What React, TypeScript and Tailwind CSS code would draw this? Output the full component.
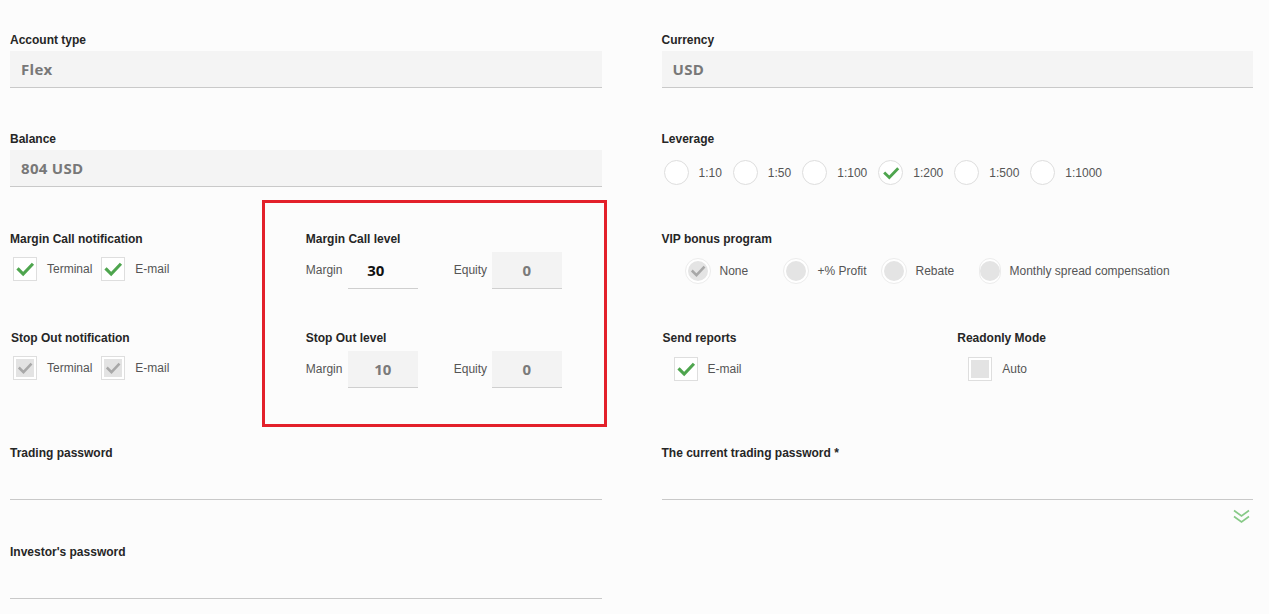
import React from "react";

const label = "block h-[18px] text-[12px] leading-[18px] font-bold text-[#262626]";
const optText = "text-[12px] text-[#555]";
const valueFont = { fontFamily: '"Open Sans", "Liberation Sans", sans-serif' };

function Check({ color, size = 24 }: { color: string; size?: number }) {
  return (
    <svg width={size} height={size} viewBox="0 0 24 24" fill="none">
      <path d="M5 12.5 L10 17.5 L19.5 7.5" stroke={color} strokeWidth="3.4" strokeLinecap="square" />
    </svg>
  );
}

function Checkbox({ state, text }: { state: "on" | "disabled-on" | "disabled"; text: string }) {
  return (
    <div className="flex items-center">
      <div className="w-6 h-6 border border-[#dedede] bg-white flex items-center justify-center">
        {state === "on" && <Check color="#4ea54e" size={22} />}
        {state === "disabled-on" && (
          <div className="w-[18px] h-[18px] bg-[#e3e3e3] flex items-center justify-center">
            <Check color="#a8a8a8" size={18} />
          </div>
        )}
        {state === "disabled" && <div className="w-[18px] h-[18px] bg-[#e3e3e3]" />}
      </div>
      <span className={`${optText} ml-[10px]`}>{text}</span>
    </div>
  );
}

function Radio({ checked, text }: { checked?: boolean; text: string }) {
  return (
    <div className="flex items-center">
      <div className="w-[25px] h-[25px] rounded-full border border-[#dedede] bg-white flex items-center justify-center">
        {checked && <Check color="#4ea54e" size={20} />}
      </div>
      <span className={`${optText} ml-[10px]`}>{text}</span>
    </div>
  );
}

function DisabledRadio({ checked, text }: { checked?: boolean; text: string }) {
  return (
    <div className="flex items-center w-[98px] shrink-0 whitespace-nowrap">
      <div className="w-[26px] h-[26px] rounded-full border border-[#ececec] bg-white flex items-center justify-center">
        <div className="w-[20px] h-[20px] rounded-full bg-[#e4e4e4] flex items-center justify-center">
          {checked && <Check color="#a8a8a8" size={18} />}
        </div>
      </div>
      <span className={`${optText} ml-[9px]`}>{text}</span>
    </div>
  );
}

function ReadField({ title, value }: { title: string; value: string }) {
  return (
    <div>
      <span className={label}>{title}</span>
      <div
        className="mt-[2px] h-[37px] bg-[#f4f4f4] border-b border-[#c9c9c9] flex items-center pl-[11px] text-[15px] font-bold text-[#787878] tracking-[0.3px]"
        style={valueFont}
      >
        {value}
      </div>
    </div>
  );
}

function PassField({ title }: { title: string }) {
  return (
    <div>
      <span className={label}>{title}</span>
      <div className="mt-px h-[37px] border-b border-[#c9c9c9]" />
    </div>
  );
}

function Level({ title, margin, equity, editable }: { title: string; margin: string; equity: string; editable?: boolean }) {
  return (
    <div>
      <span className={label}>{title}</span>
      <div className="flex items-center mt-[4px] text-[12px] text-[#555]">
        <span className="w-[42px] -mt-[2px]">Margin</span>
        <div
          className={`w-[70px] h-[37px] border-b border-[#cfcfcf] flex items-center justify-center text-[15px] font-bold ${
            editable ? "text-[#111] pr-[14px]" : "bg-[#f3f3f3] text-[#7a7a7a]"
          }`}
          style={valueFont}
        >
          {margin}
        </div>
        <span className="ml-[36px] w-[38px] -mt-[2px]">Equity</span>
        <div
          className="w-[70px] h-[37px] bg-[#f3f3f3] border-b border-[#cfcfcf] flex items-center justify-center text-[15px] font-bold text-[#7a7a7a]"
          style={valueFont}
        >
          {equity}
        </div>
      </div>
    </div>
  );
}

export default function App() {
  return (
    <div
      className="relative min-h-[614px] bg-[#fcfcfc] pl-[10px] pr-[16px] pt-[31px] pb-4"
      style={{ fontFamily: '"Liberation Sans", Arial, sans-serif' }}
    >
      {/* row 1 */}
      <div className="grid grid-cols-2 gap-x-[60px]">
        <ReadField title="Account type" value="Flex" />
        <ReadField title="Currency" value="USD" />
      </div>

      {/* row 2 */}
      <div className="grid grid-cols-2 gap-x-[60px] mt-[42px]">
        <ReadField title="Balance" value="804 USD" />
        <div>
          <span className={label}>Leverage</span>
          <div className="flex items-center gap-[11px] mt-[12px] pl-[2px]">
            <Radio text="1:10" />
            <Radio text="1:50" />
            <Radio text="1:100" />
            <Radio checked text="1:200" />
            <Radio text="1:500" />
            <Radio text="1:1000" />
          </div>
        </div>
      </div>

      {/* row 3 */}
      <div className="grid grid-cols-2 gap-x-[60px] mt-[43px]">
        <div className="grid grid-cols-2">
          <div>
            <span className={label}>Margin Call notification</span>
            <div className="flex items-center gap-[9px] mt-[9px] pl-[3px]">
              <Checkbox state="on" text="Terminal" />
              <Checkbox state="on" text="E-mail" />
            </div>
          </div>
          <Level title="Margin Call level" margin="30" equity="0" editable />
        </div>
        <div>
          <span className={label}>VIP bonus program</span>
          <div className="flex items-center mt-[10px] pl-[23px]">
            <DisabledRadio checked text="None" />
            <DisabledRadio text="+% Profit" />
            <DisabledRadio text="Rebate" />
            <DisabledRadio text="Monthly spread compensation" />
          </div>
        </div>
      </div>

      {/* row 4 */}
      <div className="grid grid-cols-2 gap-x-[60px] mt-[40px]">
        <div className="grid grid-cols-2">
          <div>
            <span className={`${label} pl-px`}>Stop Out notification</span>
            <div className="flex items-center gap-[9px] mt-[9px] pl-[3px]">
              <Checkbox state="disabled-on" text="Terminal" />
              <Checkbox state="disabled-on" text="E-mail" />
            </div>
          </div>
          <Level title="Stop Out level" margin="10" equity="0" />
        </div>
        <div className="grid grid-cols-2">
          <div>
            <span className={`${label} pl-px`}>Send reports</span>
            <div className="mt-[10px] pl-[12px]">
              <Checkbox state="on" text="E-mail" />
            </div>
          </div>
          <div>
            <span className={label}>Readonly Mode</span>
            <div className="mt-[10px] pl-[11px]">
              <Checkbox state="disabled" text="Auto" />
            </div>
          </div>
        </div>
      </div>

      {/* passwords */}
      <div className="grid grid-cols-2 gap-x-[60px] mt-[56px]">
        <div>
          <PassField title="Trading password" />
          <div className="mt-[43px]">
            <PassField title="Investor's password" />
          </div>
        </div>
        <div>
          <PassField title="The current trading password *" />
          <div className="flex justify-end mt-[9px] pr-[3px]">
            <svg width="17" height="15" viewBox="0 0 17 15" fill="none">
              <path d="M1 1.5 L8.5 7 L16 1.5 M1 7.5 L8.5 13 L16 7.5" stroke="#86c986" strokeWidth="1.6" />
            </svg>
          </div>
        </div>
      </div>

      {/* highlight annotation */}
      <div className="absolute left-[262px] top-[200px] w-[345px] h-[227px] border-[3px] border-[#e3202a] pointer-events-none" />
    </div>
  );
}
